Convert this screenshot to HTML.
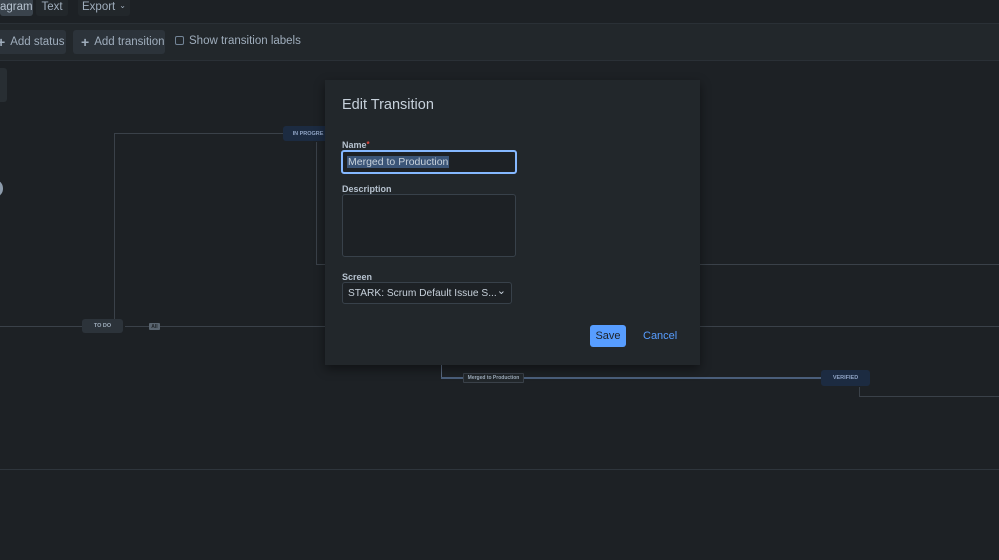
<!DOCTYPE html>
<html><head><meta charset="utf-8"><style>
*{box-sizing:border-box;margin:0;padding:0}
body{width:999px;height:560px;overflow:hidden;background:#1d2125;font-family:"Liberation Sans",sans-serif;color:#b6c2cf;position:relative}
.abs{position:absolute;white-space:nowrap}
.btn{position:absolute;background:#2c333a;border-radius:3px;font-size:11.5px;color:#9fadbc;display:flex;align-items:center;white-space:nowrap}
.line{position:absolute;background:#3a4149}
.node{position:absolute;font-size:5.5px;font-weight:bold;display:flex;align-items:center;justify-content:center;border-radius:3px;white-space:nowrap}
</style></head><body>
<div class="btn" style="left:0;top:-6px;width:33px;height:22px;background:#3a434c;color:#b6c2cf;padding-top:4px">agram</div>
<div class="btn" style="left:36px;top:-6px;width:32px;height:22px;justify-content:center;background:#22272b;padding-top:4px">Text</div>
<div class="btn" style="left:78px;top:-6px;width:52px;height:22px;justify-content:center;background:#22272b;padding-top:4px">Export <span style="font-size:8px;margin-left:4px;margin-top:-4px">&#8964;</span></div>
<div class="abs" style="left:0;top:23px;width:999px;height:38px;background:#22272b;border-top:1px solid #2a3036;border-bottom:1px solid #2a3036"></div>
<div class="btn" style="left:-4px;top:30px;width:70px;height:24px;padding-left:1px"><b style="font-size:14px;margin-right:5px">+</b>Add status</div>
<div class="btn" style="left:73px;top:30px;width:92px;height:24px;padding-left:8px"><b style="font-size:14px;margin-right:5px">+</b>Add transition</div>
<div class="abs" style="left:175px;top:36px;width:9px;height:9px;border:1px solid #738496;border-radius:2px"></div>
<div class="abs" style="left:189px;top:35px;font-size:11.5px;color:#9fadbc">Show transition labels</div>
<div class="abs" style="left:-3px;top:68px;width:10px;height:34px;background:#282e33;border-radius:3px"></div>
<div class="abs" style="left:-8px;top:181px;width:11px;height:15px;background:#8c9bab;border-radius:50%"></div>
<div class="line" style="left:114px;top:133px;width:170px;height:1px"></div>
<div class="line" style="left:114px;top:133px;width:1px;height:187px"></div>
<div class="line" style="left:316px;top:142px;width:1px;height:123px"></div>
<div class="line" style="left:316px;top:264px;width:683px;height:1px"></div>
<div class="line" style="left:0;top:326px;width:82px;height:1px"></div>
<div class="line" style="left:125px;top:326px;width:874px;height:1px"></div>
<div class="line" style="left:441px;top:365px;width:1px;height:13px;background:#5a6a80"></div>
<div class="line" style="left:441px;top:377px;width:380px;height:2px;background:#4a5e7a"></div>
<div class="line" style="left:859px;top:387px;width:1px;height:10px"></div>
<div class="line" style="left:859px;top:396px;width:140px;height:1px"></div>
<div class="line" style="left:0;top:469px;width:999px;height:1px;background:#2e353c"></div>
<div class="node" style="left:283px;top:126px;width:50px;height:15px;background:#1c2b41;color:#8fa3c4">IN PROGRE</div>
<div class="node" style="left:82px;top:319px;width:41px;height:14px;background:#2c333a;color:#9fadbc">TO DO</div>
<div class="node" style="left:149px;top:323px;width:11px;height:7px;background:#5a6570;color:#1d2125;border-radius:1px;font-size:5px">All</div>
<div class="node" style="left:463px;top:373px;width:61px;height:10px;background:#22272b;border:1px solid #3a4149;color:#9fadbc;font-size:5px;border-radius:1px">Merged to Production</div>
<div class="node" style="left:821px;top:370px;width:49px;height:16px;background:#1c2b41;color:#8fa3c4">VERIFIED</div>
<div class="abs" style="left:325px;top:80px;width:375px;height:285px;background:#22272b;box-shadow:0 4px 10px rgba(0,0,0,.45)">
  <div class="abs" style="left:17px;top:17px;font-size:14.5px;color:#c7d1db">Edit Transition</div>
  <div class="abs" style="left:17px;top:60px;font-size:9px;font-weight:bold;color:#b6c2cf">Name<span style="color:#e2483d;font-size:8px;vertical-align:top">*</span></div>
  <div class="abs" style="left:16px;top:70px;width:176px;height:24px;border:2px solid #85b8ff;border-radius:3px;background:#1d2125"></div>
  <div class="abs" style="left:22px;top:76px;font-size:10.5px;color:#c7d1db;background:#3b5577;padding:0 1px;line-height:12px">Merged to Production</div>
  <div class="abs" style="left:17px;top:104px;font-size:9px;font-weight:bold">Description</div>
  <div class="abs" style="left:17px;top:114px;width:174px;height:63px;border:1px solid #38414a;border-radius:3px;background:#1d2125"></div>
  <div class="abs" style="left:17px;top:192px;font-size:9px;font-weight:bold">Screen</div>
  <div class="abs" style="left:17px;top:202px;width:170px;height:22px;border:1px solid #38414a;border-radius:3px;background:#1d2125;font-size:10.2px;color:#c7d1db;padding:5px 0 0 5px">STARK: Scrum Default Issue S...<span style="position:absolute;right:5px;top:1px;font-size:11px">&#8964;</span></div>
  <div class="abs" style="left:265px;top:245px;width:36px;height:22px;background:#579dff;border-radius:3px;color:#1d2125;font-size:11px;display:flex;align-items:center;justify-content:center">Save</div>
  <div class="abs" style="left:318px;top:250px;font-size:11px;color:#579dff">Cancel</div>
</div>
</body></html>
